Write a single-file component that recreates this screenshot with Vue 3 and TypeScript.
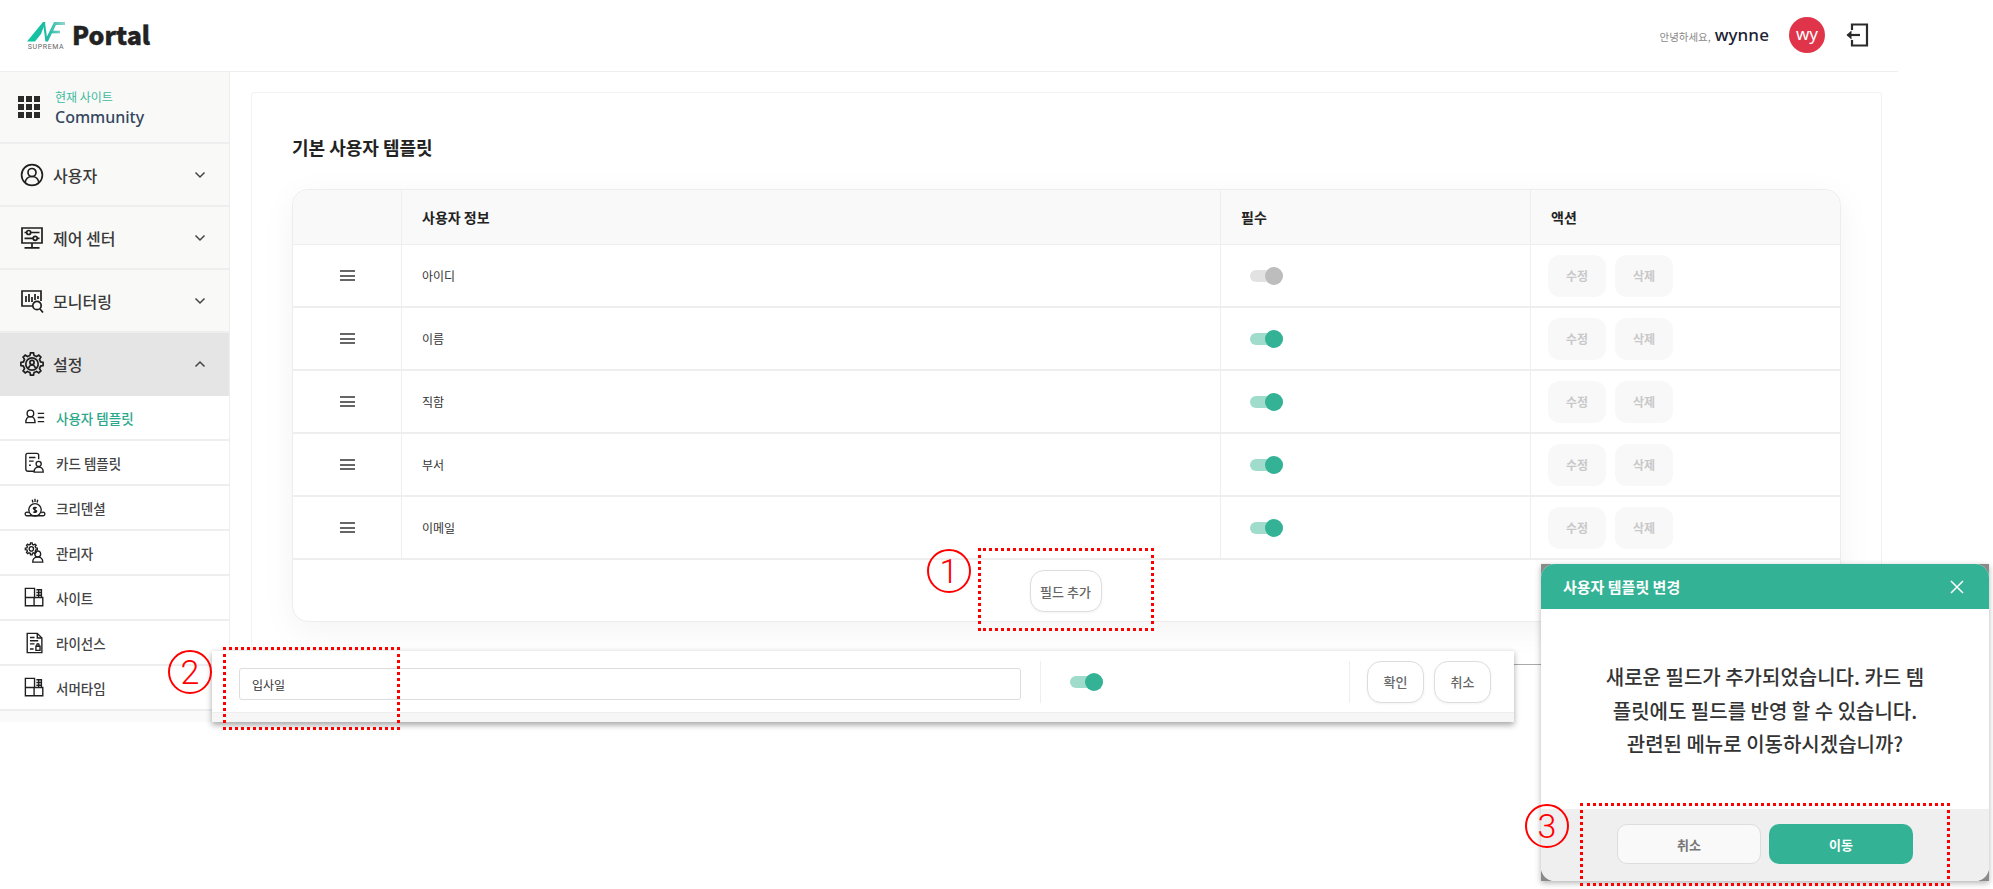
<script setup lang="ts">
interface NavItem {
  label: string
  paths: string[]
  open?: boolean
}

interface SubItem {
  label: string
  paths: string[]
  active?: boolean
}

// builds a cog outline, used by the settings and admin icons
const gearPath = (cx: number, cy: number, outer: number, inner: number, teeth: number) => {
  const pts: string[] = []
  for (let i = 0; i < teeth; i++) {
    const step = (Math.PI * 2) / teeth
    const a = i * step
    const offsets: [number, number][] = [
      [-0.3, inner],
      [-0.17, outer],
      [0.17, outer],
      [0.3, inner]
    ]
    offsets.forEach(([o, r]) => {
      const x = cx + Math.cos(a + o * step) * r
      const y = cy + Math.sin(a + o * step) * r
      pts.push(`${x.toFixed(2)} ${y.toFixed(2)}`)
    })
  }
  return 'M' + pts.join('L') + 'Z'
}

const circle = (cx: number, cy: number, r: number) =>
  `M${cx - r} ${cy}a${r} ${r} 0 1 0 ${r * 2} 0a${r} ${r} 0 1 0 ${-r * 2} 0z`

const navItems: NavItem[] = [
  {
    label: '사용자',
    paths: [circle(12, 12, 10.4), circle(12, 9.5, 4), 'M5 19.5c.8-3.6 3.6-6 7-6s6.200 2.400 7 6']
  },
  {
    label: '제어 센터',
    paths: [
      'M2 2h20v15H2z',
      'M12 17v4.500M4.500 21.800h15',
      'M4.500 6.500h2M11 6.500h8.500',
      circle(8.700, 6.500, 2),
      'M4.500 12.300h8.500M17.500 12.300h2',
      circle(15.200, 12.300, 2)
    ]
  },
  {
    label: '모니터링',
    paths: [
      'M13 17H2V2h19v10',
      'M6 13V7M9 13V5M12 13V8M15 11V5M18 10V7',
      circle(17, 16.500, 4.200),
      'M20 20l3 3.500'
    ]
  },
  {
    label: '설정',
    open: true,
    paths: [gearPath(12, 12, 11.200, 8.800, 8), circle(12, 12, 6.200), circle(12, 10.500, 2.100), 'M8.600 16c.6-2 1.800-3 3.400-3s2.800 1 3.400 3']
  }
]

const siteIcon = ['M1.500 1.500h10v10h-10zM1.500 11.500v9h9.500v-9M11 20.500h9.500v-9H11', 'M13.500 3h5.500v8M13.500 6h5.500M13.500 9h5.500M16 3v8']

const subItems: SubItem[] = [
  {
    label: '사용자 템플릿',
    active: true,
    paths: [circle(7, 7, 3.600), 'M2 17c0-4 2-6.500 5-6.500s5 2.500 5 6.500zM15 7h7M15 11.500h7M15 16h7']
  },
  {
    label: '카드 템플릿',
    paths: [
      'M11 21H4.500Q2 21 2 18.500V3.500Q2 1.500 4 1.500h10q2 0 2 2V8',
      'M5.500 6h7M5.500 10h5M5.500 14.500h2',
      circle(16, 13, 2.800),
      'M11 22c0-3.500 2-5.500 5-5.500s5 2 5 5.500z'
    ]
  },
  {
    label: '크리덴셜',
    paths: [
      circle(12, 14, 6.800),
      'M12 10.500v7M13.800 12c-1-1-3.600-1-3.600.6s3.600 1.200 3.600 2.900-2.600 1.500-3.600.5',
      'M12 2v3.500M9 3l.8 3M15 3l-.8 3',
      'M5 17.500a2 2 0 1 0-2 3h18a2 2 0 1 0-2-3'
    ]
  },
  {
    label: '관리자',
    paths: [
      gearPath(8, 7.500, 6.600, 5, 8),
      circle(8, 7.500, 2.400),
      circle(15, 13, 3.200),
      'M9.500 22c0-3.500 2-5.500 5.500-5.500s5.500 2 5.500 5.500z'
    ]
  },
  { label: '사이트', paths: siteIcon },
  {
    label: '라이선스',
    paths: [
      'M3.500 1.500h11l5 5v16h-16z',
      'M14.500 1.500v5h5',
      'M6.500 6h5M6.500 9.500h9M6.500 13h5M6.500 18.500h4',
      'M13 15.500h4.500v4.500H13zM14 15.500v-1.500a1.200 1.200 0 0 1 2.400 0v1.500'
    ]
  },
  { label: '서머타임', paths: siteIcon }
]

const fields = [
  { name: '아이디', locked: true },
  { name: '이름', locked: false },
  { name: '직함', locked: false },
  { name: '부서', locked: false },
  { name: '이메일', locked: false }
]

const siteDots = Array.from({ length: 9 }, (_, i) => i)
</script>

<template>
  <div class="page">
    <header class="topbar">
      <div class="brand">
        <div class="logo">
          <svg class="logo-mark" viewBox="0 0 38 21">
            <defs>
              <linearGradient id="logoFill" gradientUnits="userSpaceOnUse" x1="0" x2="38" y1="0" y2="0">
                <stop offset="0" stop-color="#0cc8a0" />
                <stop offset="0.55" stop-color="#1fb9a5" />
                <stop offset="1" stop-color="#94d6ce" />
              </linearGradient>
            </defs>
            <path d="M0 20.500L16 1h2.500L14 13l-6 7.500z" fill="url(#logoFill)" />
            <path d="M17 2l2.500 18.500" fill="none" stroke="url(#logoFill)" stroke-width="2" />
            <path d="M19.500 20L28 2.500h10" fill="none" stroke="url(#logoFill)" stroke-width="3" />
            <path d="M23 11h10" fill="none" stroke="url(#logoFill)" stroke-width="2.600" />
          </svg>
          <span class="logo-text">suprema</span>
        </div>
        <span class="brand-name">Portal</span>
      </div>
      <div class="account">
        <span class="hello">안녕하세요,</span>
        <span class="user-name">wynne</span>
        <span class="avatar">wy</span>
        <svg class="logout" viewBox="0 0 24 24" fill="none" stroke="#2a2a2a" stroke-width="2.200">
          <path d="M7 7V1.500h15v21H7V17" />
          <path d="M15 12H2.500" />
          <path d="M6.500 7.500L1.500 12l5 4.500z" fill="#2a2a2a" stroke="none" />
        </svg>
      </div>
    </header>

    <div class="layout">
      <aside class="sidebar">
        <div class="current-site">
          <div class="site-grid">
            <i v-for="dot in siteDots" :key="dot"></i>
          </div>
          <div class="site-text">
            <span class="site-label">현재 사이트</span>
            <span class="site-name">Community</span>
          </div>
        </div>
        <template v-for="item in navItems" :key="item.label">
          <div class="nav-item" :class="{ open: item.open }">
            <svg class="nav-icon" viewBox="0 0 24 24" fill="none" stroke="#1f1f1f" stroke-width="1.700">
              <path v-for="d in item.paths" :key="d" :d="d" />
            </svg>
            <span class="nav-label">{{ item.label }}</span>
            <svg class="chevron" viewBox="0 0 12 8" fill="none" stroke="#444" stroke-width="1.500">
              <path :d="item.open ? 'M1.500 6.500L6 2l4.500 4.500' : 'M1.500 1.500L6 6l4.500-4.500'" />
            </svg>
          </div>
        </template>
        <div v-for="sub in subItems" :key="sub.label" class="sub-item" :class="{ active: sub.active }">
          <svg class="sub-icon" viewBox="0 0 24 24" fill="none" stroke="#1f1f1f" stroke-width="1.500">
            <path v-for="d in sub.paths" :key="d" :d="d" />
          </svg>
          <span>{{ sub.label }}</span>
        </div>
      </aside>

      <main class="content">
        <section class="card">
          <h2 class="card-title">기본 사용자 템플릿</h2>
          <div class="table">
            <div class="row head">
              <div class="cell"></div>
              <div class="cell">사용자 정보</div>
              <div class="cell">필수</div>
              <div class="cell">액션</div>
            </div>
            <div v-for="field in fields" :key="field.name" class="row">
              <div class="cell handle"><span class="bars"><i></i><i></i><i></i></span></div>
              <div class="cell">{{ field.name }}</div>
              <div class="cell toggle-cell">
                <span class="toggle" :class="{ off: field.locked }"><i></i></span>
              </div>
              <div class="cell actions">
                <button class="ghost">수정</button>
                <button class="ghost">삭제</button>
              </div>
            </div>
            <div class="table-foot">
              <button class="outline">필드 추가</button>
            </div>
          </div>
        </section>
      </main>
    </div>

    <!-- 새 필드 입력 행 -->
    <div class="new-row">
      <div class="new-row-body">
        <div class="new-name">
          <input class="name-input" value="입사일" />
        </div>
        <div class="new-toggle">
          <span class="toggle"><i></i></span>
        </div>
        <div class="new-actions">
          <button class="outline tall">확인</button>
          <button class="outline tall">취소</button>
        </div>
      </div>
    </div>

    <div class="modal">
      <div class="modal-box">
        <div class="modal-head">
          <span>사용자 템플릿 변경</span>
          <svg class="modal-close" viewBox="0 0 14 14" fill="none" stroke="#fff" stroke-width="1.500">
            <path d="M1 1l12 12M13 1L1 13" />
          </svg>
        </div>
        <div class="modal-body">새로운 필드가 추가되었습니다. 카드 템플릿에도 필드를 반영 할 수 있습니다. 관련된 메뉴로 이동하시겠습니까?</div>
        <div class="modal-foot">
          <button class="modal-btn cancel">취소</button>
          <button class="modal-btn go">이동</button>
        </div>
      </div>
    </div>

    <!-- 가이드 표시 -->
    <div class="mark box-one"></div>
    <div class="mark box-two"></div>
    <div class="mark box-three"></div>
    <div class="num num-one">1</div>
    <div class="num num-two">2</div>
    <div class="num num-three">3</div>
  </div>
</template>

<style>
html,
body {
  margin: 0;
  background: #fff;
}
</style>

<style scoped>
.page {
  position: relative;
  width: 1993px;
  height: 889px;
  overflow: hidden;
  background: #fff;
  font-family: "Noto Sans CJK KR", "Noto Sans", sans-serif;
  color: #333;
}

button {
  font-family: inherit;
  padding: 0;
  cursor: pointer;
}

.topbar {
  width: 1898px;
  height: 72px;
  box-sizing: border-box;
  border-bottom: 1px solid #eee;
  display: flex;
  align-items: center;
  justify-content: space-between;
  padding: 0 29px 0 27px;
}

.brand {
  display: flex;
  align-items: center;
  gap: 7px;
}

.logo {
  width: 38px;
  display: flex;
  flex-direction: column;
  align-items: center;
  margin-top: 2px;
}

.logo-mark {
  width: 38px;
  height: 21px;
}

.logo-text {
  font-family: Roboto, sans-serif;
  font-size: 7px;
  line-height: 10px;
  letter-spacing: 0.6px;
  text-transform: uppercase;
  color: #666;
}

.brand-name {
  font-size: 25px;
  font-weight: 900;
  -webkit-text-stroke: 0.4px #222;
  color: #222;
  line-height: 30px;
  margin-bottom: 4px;
}

.account {
  display: flex;
  align-items: center;
  margin-top: -2px;
}

.hello {
  font-size: 10.500px;
  color: #888;
  margin-top: 4px;
}

.user-name {
  font-family: "Noto Sans", sans-serif;
  font-size: 17px;
  font-weight: 500;
  letter-spacing: 0.1px;
  color: #1a2233;
  margin-left: 4px;
}

.avatar {
  width: 36px;
  height: 36px;
  border-radius: 50%;
  background: #e0344a;
  color: #fff;
  font-family: "Noto Sans", sans-serif;
  font-size: 17px;
  line-height: 33px;
  text-align: center;
  margin-left: 20px;
}

.logout {
  width: 24px;
  height: 24px;
  margin-left: 20px;
}

.layout {
  display: flex;
  align-items: flex-start;
  width: 1898px;
}

.sidebar {
  width: 230px;
  flex: none;
  box-sizing: border-box;
  border-right: 1px solid #eee;
  background: #fafafa;
  padding-bottom: 11px;
}

.current-site {
  height: 72px;
  box-sizing: border-box;
  border-bottom: 2px solid #eee;
  background: #f9f9f8;
  display: flex;
  align-items: center;
  padding-left: 18px;
  gap: 15px;
}

.site-grid {
  display: grid;
  grid-template-columns: repeat(3, 6px);
  gap: 2px;
}

.site-grid i {
  width: 6px;
  height: 6px;
  background: #2b2b2b;
}

.site-text {
  display: flex;
  flex-direction: column;
  margin-top: 3px;
}

.site-label {
  font-size: 12px;
  line-height: 17px;
  color: #3dbb9f;
}

.site-name {
  font-family: "Noto Sans", sans-serif;
  font-size: 16px;
  line-height: 24px;
  font-weight: 500;
  color: #34475f;
}

.nav-item {
  height: 63px;
  box-sizing: border-box;
  border-bottom: 2px solid #eee;
  background: #f9f9f8;
  display: flex;
  align-items: center;
  padding: 0 23px 0 20px;
}

.nav-item.open {
  background: #e5e5e5;
  border-bottom-color: #e5e5e5;
}

.nav-icon {
  width: 24px;
  height: 24px;
  flex: none;
}

.nav-label {
  font-size: 16px;
  font-weight: 500;
  color: #3a3a3a;
  margin-left: 9px;
  flex: 1;
}

.chevron {
  width: 12px;
  height: 8px;
}

.sub-item {
  height: 45px;
  box-sizing: border-box;
  border-bottom: 2px solid #eee;
  background: #fff;
  display: flex;
  align-items: center;
  padding-left: 24px;
  gap: 10px;
  font-size: 13.500px;
  font-weight: 500;
  color: #444;
}

.sub-item.active {
  color: #2ba88a;
}

.sub-icon {
  width: 22px;
  height: 22px;
  flex: none;
}

.content {
  flex: 1;
  padding: 20px 16px 0 21px;
}

.card {
  box-sizing: border-box;
  height: 573px;
  border: 1px solid #f2f2f2;
  border-bottom-color: #aaa;
  border-radius: 4px 4px 0 0;
  padding: 40px 40px 0 40px;
}

.card-title {
  margin: 0 0 26px;
  font-size: 18px;
  line-height: 28px;
  padding-bottom: 2px;
  font-weight: 700;
  color: #222;
}

.table {
  height: 433px;
  box-sizing: border-box;
  border: 1px solid #ededed;
  border-radius: 16px;
  box-shadow: 0 8px 34px rgba(0, 0, 0, 0.05);
  background: #fff;
  font-size: 12px;
  color: #333;
}

.row {
  display: grid;
  grid-template-columns: 108px 819px 310px 1fr;
  height: 63px;
  box-sizing: border-box;
  border-bottom: 2px solid #eee;
}

.row.head {
  height: 55px;
  border-bottom-width: 1px;
  background: #f9f9f9;
  border-radius: 16px 16px 0 0;
  font-size: 14px;
  font-weight: 700;
  color: #222;
}

.cell {
  display: flex;
  align-items: center;
  padding-left: 20px;
  border-left: 1px solid #eee;
}

.cell:first-child {
  border-left: 0;
  padding-left: 0;
}

.handle {
  justify-content: center;
}

.bars {
  display: flex;
  flex-direction: column;
  gap: 2.500px;
}

.bars i {
  width: 15px;
  height: 2px;
  background: #666;
}

.toggle-cell {
  padding-left: 29px;
}

.toggle {
  position: relative;
  display: block;
  width: 33px;
  height: 12px;
  border-radius: 6px;
  background: #9fdccb;
}

.toggle i {
  position: absolute;
  right: 0;
  top: -3px;
  width: 18px;
  height: 18px;
  border-radius: 50%;
  background: #34b295;
}

.toggle.off {
  background: #e2e2e2;
}

.toggle.off i {
  background: #bdbdbd;
}

.actions {
  padding-left: 17px;
  gap: 9px;
}

.ghost {
  width: 58px;
  height: 42px;
  border: 0;
  border-radius: 12px;
  background: #f8f8f8;
  color: #c8c8c8;
  font-size: 12px;
  font-weight: 700;
}

.table-foot {
  height: 62px;
  display: flex;
  align-items: flex-start;
  justify-content: center;
  padding: 10px 2px 0 0;
  box-sizing: border-box;
}

.outline {
  width: 72px;
  height: 42px;
  border: 1px solid #ddd;
  border-radius: 14px;
  background: #fff;
  color: #666;
  font-size: 13px;
  font-weight: 500;
  box-shadow: 0 1px 3px rgba(0, 0, 0, 0.05);
}

.outline.tall {
  width: 57px;
}

.new-row {
  position: absolute;
  left: 212px;
  top: 650px;
  width: 1302px;
  height: 72px;
  background: #f6f6f6;
  box-shadow: 0 3px 6px rgba(0, 0, 0, 0.35);
}

.new-row-body {
  display: grid;
  grid-template-columns: 828px 309px 1fr;
  height: 63px;
  background: #fff;
  border-top: 1px solid #eee;
  border-bottom: 1px solid #eee;
  box-sizing: border-box;
  align-items: center;
}

.new-name {
  padding: 5px 0 0 27px;
}

.name-input {
  display: block;
  width: 782px;
  height: 32px;
  box-sizing: border-box;
  border: 1px solid #ddd;
  border-radius: 3px;
  padding: 0 12px;
  font-family: inherit;
  font-size: 12px;
  color: #333;
  outline: none;
}

.new-toggle,
.new-actions {
  height: 42px;
  display: flex;
  align-items: center;
  border-left: 1px solid #eee;
}

.new-toggle {
  padding-left: 29px;
}

.new-actions {
  padding-left: 17px;
  gap: 10px;
}

.modal {
  position: absolute;
  left: 1541px;
  top: 564px;
  width: 448px;
  height: 317px;
  background: #8a8a8a;
  box-shadow: 0 2px 6px rgba(0, 0, 0, 0.3);
}

.modal-box {
  height: 100%;
  border-radius: 14px;
  overflow: hidden;
  background: #fff;
  display: flex;
  flex-direction: column;
}

.modal-head {
  height: 45px;
  flex: none;
  background: #34b295;
  color: #fff;
  display: flex;
  align-items: center;
  justify-content: space-between;
  padding: 0 25px 0 22px;
  font-size: 15px;
  font-weight: 700;
}

.modal-close {
  width: 14px;
  height: 14px;
}

.modal-body {
  flex: 1;
  display: flex;
  align-items: center;
  justify-content: center;
  text-align: center;
  padding: 3px 63px 0;
  word-break: break-all;
  font-size: 20px;
  line-height: 33.500px;
  font-weight: 500;
  color: #333;
}

.modal-foot {
  height: 72px;
  flex: none;
  background: #efefef;
  display: flex;
  justify-content: center;
  gap: 8px;
  padding-top: 15px;
  box-sizing: border-box;
}

.modal-btn {
  width: 144px;
  height: 40px;
  border-radius: 10px;
  font-size: 13px;
  font-weight: 700;
}

.modal-btn.cancel {
  background: #f9f9f9;
  border: 1px solid #ddd;
  color: #777;
}

.modal-btn.go {
  background: #34b295;
  border: 0;
  color: #fff;
}

.mark {
  position: absolute;
  box-sizing: border-box;
  border: 3px dotted #f00;
}

.box-one {
  left: 978px;
  top: 548px;
  width: 176px;
  height: 83px;
}

.box-two {
  left: 223px;
  top: 647px;
  width: 177px;
  height: 83px;
}

.box-three {
  left: 1580px;
  top: 803px;
  width: 370px;
  height: 83px;
}

.num {
  position: absolute;
  box-sizing: border-box;
  width: 44px;
  height: 44px;
  border: 2px solid #f00;
  border-radius: 50%;
  display: flex;
  align-items: center;
  justify-content: center;
  font-family: Roboto, sans-serif;
  font-weight: 300;
  font-size: 34px;
  color: #f00;
}

.num-one {
  left: 927px;
  top: 549px;
}

.num-two {
  left: 168px;
  top: 650px;
}

.num-three {
  left: 1525px;
  top: 804px;
}
</style>
